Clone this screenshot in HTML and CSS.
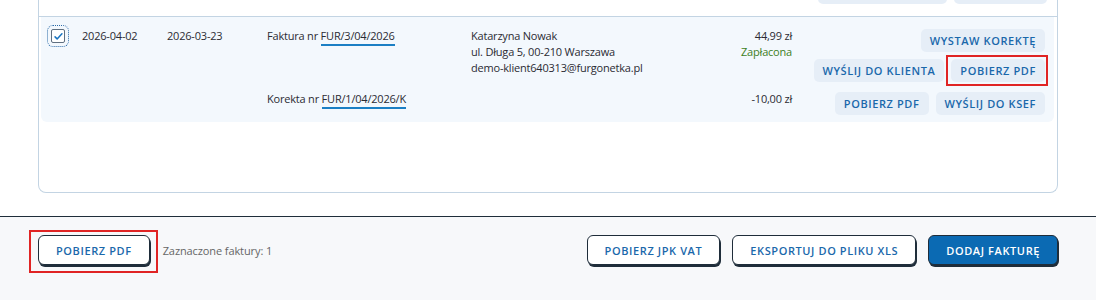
FILE: index.html
```html
<!DOCTYPE html>
<html lang="pl">
<head>
  <meta charset="UTF-8" />
  <meta name="viewport" content="width=device-width, initial-scale=1.0" />
  <title>Faktury</title>
  <link rel="stylesheet" href="styles.css">
</head>
<body>
  <div class="content">
    <div class="card">
      <!-- poprzedni wiersz, widać tylko dolną krawędź przycisków -->
      <div class="row-prev">
        <div class="btn-line">
          <span class="btn-soft stub stub-wide"></span>
          <span class="btn-soft stub stub-narrow"></span>
        </div>
      </div>

      <div class="row-selected">
        <div class="line">
          <div class="cell-check">
            <span class="checkbox">
              <svg viewBox="0 0 16 16" width="11" height="11"><path d="M3 8.5l3 3 7-7.5" fill="none" stroke="#1a74c0" stroke-width="2.2" stroke-linecap="round" stroke-linejoin="round"/></svg>
            </span>
          </div>
          <div>2026-04-02</div>
          <div>2026-03-23</div>
          <div>Faktura nr <a class="doc-link">FUR/3/04/2026</a></div>
          <div>
            Katarzyna Nowak<br>
            ul. Długa 5, 00-210 Warszawa<br>
            demo-klient640313@furgonetka.pl
          </div>
          <div class="cell-amount">
            44,99 zł<br>
            <span class="paid">Zapłacona</span>
          </div>
          <div class="actions">
            <div class="btn-line">
              <button class="btn-soft">WYSTAW KOREKTĘ</button>
            </div>
            <div class="btn-line">
              <button class="btn-soft">WYŚLIJ DO KLIENTA</button>
              <button class="btn-soft marked">POBIERZ PDF</button>
            </div>
          </div>
        </div>

        <div class="line sub">
          <div></div>
          <div></div>
          <div></div>
          <div>Korekta nr <a class="doc-link">FUR/1/04/2026/K</a></div>
          <div></div>
          <div class="cell-amount">-10,00 zł</div>
          <div class="actions">
            <div class="btn-line">
              <button class="btn-soft">POBIERZ PDF</button>
              <button class="btn-soft">WYŚLIJ DO KSEF</button>
            </div>
          </div>
        </div>
      </div>

      <div class="card-bottom"></div>
    </div>
  </div>

  <div class="footer">
    <div class="footer-left">
      <button class="btn-outline marked-big">POBIERZ PDF</button>
      <span class="selected-info">Zaznaczone faktury: 1</span>
    </div>
    <div class="footer-right">
      <button class="btn-outline">POBIERZ JPK VAT</button>
      <button class="btn-outline">EKSPORTUJ DO PLIKU XLS</button>
      <button class="btn-outline btn-primary">DODAJ FAKTURĘ</button>
    </div>
  </div>
</body>
</html>
```

FILE: styles.css
```css
html, body {
  margin: 0;
  height: 100%;
  font-family: "Open Sans", Arial, sans-serif;
  font-size: 11px;
  letter-spacing: -0.2px;
  color: #2b2b33;
  background: #fff;
}

.content {
  height: 216px;
  overflow: hidden;
  display: flex;
  flex-direction: column;
  justify-content: flex-end;
  padding: 0 38px 23px;
  box-sizing: border-box;
}

.card {
  border: 1px solid #c3d4e3;
  border-top: none;
  border-radius: 0 0 8px 8px;
  padding: 0 3px 0 2px;
}

.row-prev {
  display: flex;
  justify-content: flex-end;
  padding: 0 10px 12px 0;
  margin: 0 -3px 0 -2px;
  border-bottom: 1px solid #c3d4e3;
}

.row-selected {
  background: #f3f8fd;
  border-radius: 0 0 6px 6px;
  padding: 11px 9px 7px 10px;
}

.line {
  display: grid;
  grid-template-columns: 31px 85px 100px 204px 250px 71px 1fr;
  line-height: 16px;
}

.line.sub {
  margin-top: 9px;
}

.cell-check {
  padding-top: 1px;
}

.checkbox {
  display: flex;
  align-items: center;
  justify-content: center;
  width: 12px;
  height: 12px;
  background: #fff;
  border: 1.5px solid #5f6f80;
  border-radius: 2px;
  outline: 1px dotted #2a6aa8;
  outline-offset: 3px;
}

.doc-link {
  color: #2b2b33;
  border-bottom: 2px solid #1b7fc4;
  padding-bottom: 1px;
}

.cell-amount {
  text-align: right;
}

.paid {
  color: #3d7f24;
}

.actions {
  display: flex;
  flex-direction: column;
  align-items: flex-end;
  gap: 7px;
  padding-top: 1px;
}

.btn-line {
  display: flex;
  gap: 7px;
}

button {
  font-family: "Open Sans", Arial, sans-serif;
  font-weight: 600;
  font-size: 11px;
  letter-spacing: 0.6px;
  line-height: 15px;
  cursor: pointer;
}

.btn-soft {
  height: 23px;
  padding: 0 9px;
  border: none;
  border-radius: 5px;
  background: #e6eef7;
  color: #1a68ab;
}

.stub {
  display: block;
}

.stub-wide {
  width: 111px;
}

.stub-narrow {
  width: 75px;
}

.marked {
  position: relative;
}

.marked::after {
  content: "";
  position: absolute;
  top: -4px;
  left: -5px;
  right: -3px;
  bottom: -4px;
  border: 2px solid #e02424;
}

.card-bottom {
  height: 70px;
}

.footer {
  height: 84px;
  box-sizing: border-box;
  border-top: 1px solid #1f2d3a;
  background: #f7f8fa;
  display: flex;
  justify-content: space-between;
  align-items: flex-start;
  padding: 18px 38px 0;
}

.footer-left {
  display: flex;
  align-items: center;
  gap: 13px;
}

.footer-right {
  display: flex;
  gap: 12px;
}

.selected-info {
  color: #666;
  font-size: 11px;
  letter-spacing: -0.1px;
}

.btn-outline {
  height: 30px;
  padding: 0 17px;
  background: #fff;
  color: #1a68ab;
  border: 1px solid #1f2d3a;
  border-radius: 6px;
  box-shadow: 1px 2px 0 #1f2d3a;
}

.btn-primary {
  background: #0b6ab3;
  color: #fff;
}

.marked-big {
  position: relative;
}

.marked-big::after {
  content: "";
  position: absolute;
  top: -6px;
  left: -10px;
  right: -9px;
  bottom: -9px;
  border: 2px solid #e02424;
}
```
